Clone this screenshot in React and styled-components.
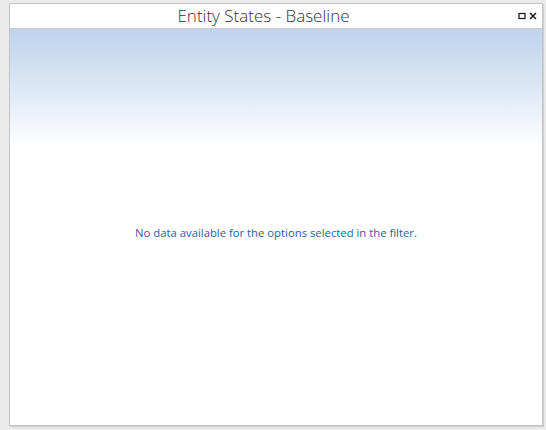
import React from 'react'
import styled, { createGlobalStyle } from 'styled-components'

const GlobalStyle = createGlobalStyle`
    html, body {
        margin: 0;
        padding: 0;
        background: #ebebeb;
        font-family: "Open Sans", "Noto Sans", sans-serif;
    }
`

const Page = styled.div`
    width: 546px;
    height: 430px;
    padding: 3px 3px 4px 9px;
    box-sizing: border-box;
    display: flex;
`

const Panel = styled.div`
    flex: 1;
    display: flex;
    flex-direction: column;
    background: #fff;
    border: 1px solid #c4c4c4;
    box-shadow: 1px 1px 1px rgba(0, 0, 0, 0.12);
`

const Header = styled.div`
    height: 24px;
    display: flex;
    align-items: center;
    border-bottom: 1px solid #cdcdcd;
`

const Title = styled.div`
    flex: 1;
    text-align: center;
    font-size: 17px;
    font-weight: 300;
    color: #333;
    margin-top: -1px;
`

const Controls = styled.div`
    width: 20px;
    padding-right: 5px;
    display: flex;
    gap: 3px;
    align-items: center;
    justify-content: flex-end;
    margin-top: -1px;
`

const Body = styled.div`
    flex: 1;
    display: flex;
    align-items: center;
    justify-content: center;
    background: linear-gradient(to bottom, #bfd3ed 0px, #dde8f6 60px, #ffffff 118px, #ffffff 100%);
`

const Message = styled.div`
    font-size: 11.3px;
    color: #2a62a5;
    margin-top: 11px;
`

const App = () => {
    return (
        <>
            <GlobalStyle />
            <Page>
                <Panel>
                    <Header>
                        <Title>Entity States - Baseline</Title>
                        <Controls>
                            <svg width="8" height="8" viewBox="0 0 8 8">
                                <rect x="1" y="1.5" width="6" height="5" fill="none" stroke="#222" strokeWidth="1.3" />
                            </svg>
                            <svg width="8" height="8" viewBox="0 0 8 8">
                                <path d="M1 1 L7 7 M7 1 L1 7" stroke="#222" strokeWidth="1.6" />
                            </svg>
                        </Controls>
                    </Header>
                    <Body>
                        <Message>No data available for the options selected in the filter.</Message>
                    </Body>
                </Panel>
            </Page>
        </>
    )
}

export default App
